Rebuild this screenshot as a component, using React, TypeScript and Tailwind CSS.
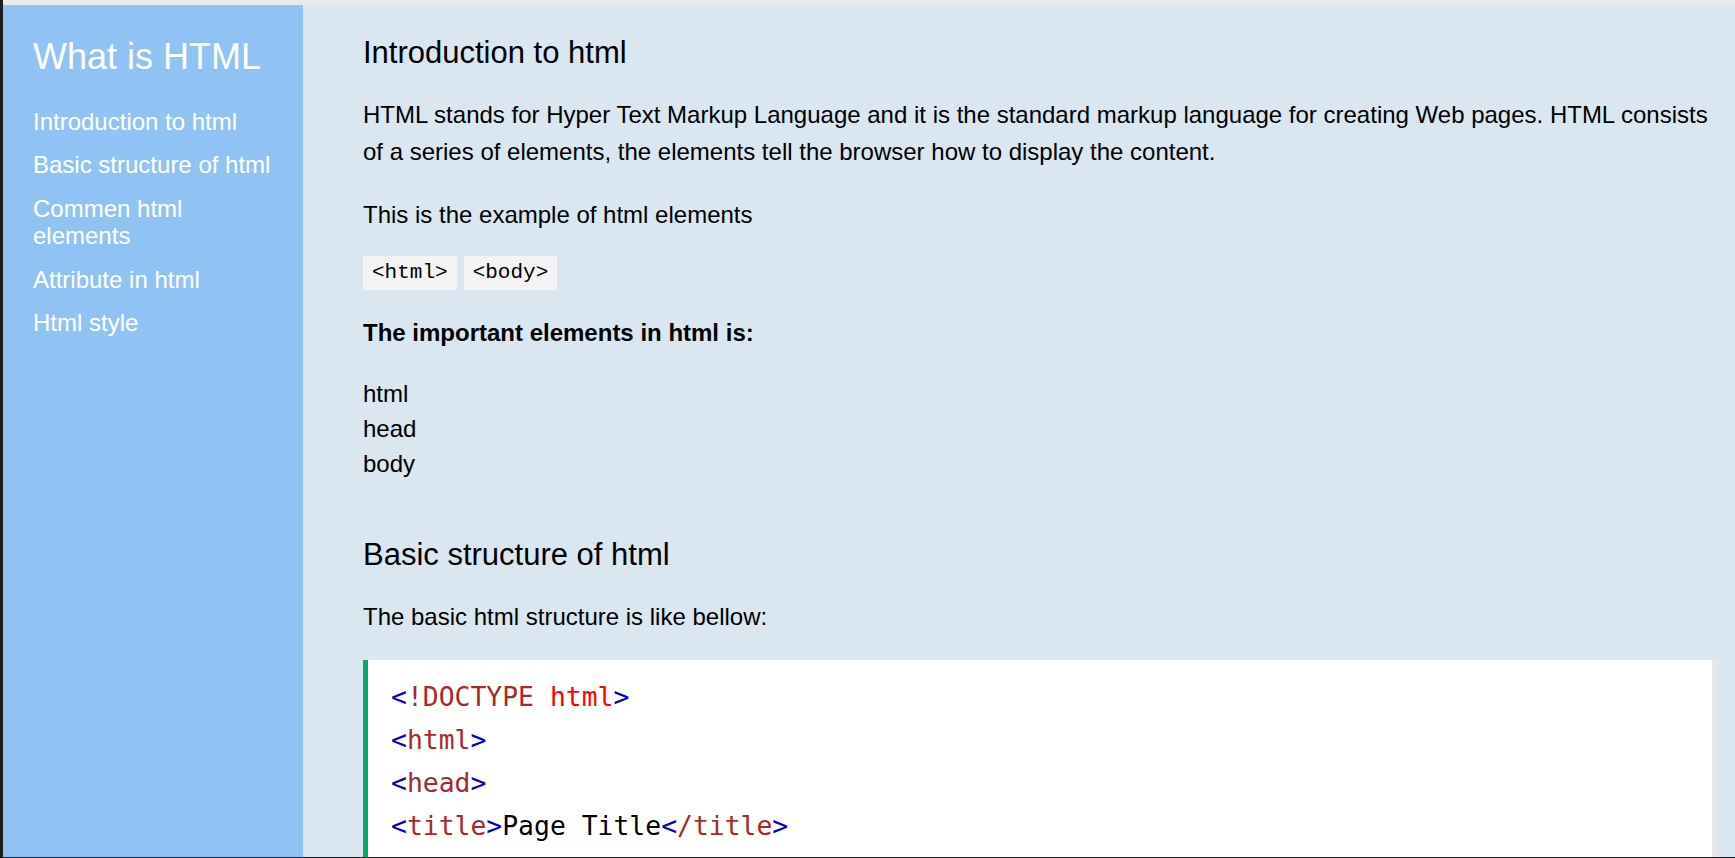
const navItems = [
  "Introduction to html",
  "Basic structure of html",
  "Commen html elements",
  "Attribute in html",
  "Html style",
];

const Lt = () => <span className="text-[#0000cd]">&lt;</span>;
const Gt = () => <span className="text-[#0000cd]">&gt;</span>;

const Tag = ({ name, close }: { name: string; close?: boolean }) => (
  <>
    <Lt />
    <span className="text-[#a52a2a]">{close ? "/" : ""}{name}</span>
    <Gt />
  </>
);

const Sidebar = () => (
  <aside className="w-[300px] shrink-0 bg-[#91c2f4] px-[30px] pt-[31px] text-white">
    <h1 className="text-[36px] leading-[41px] font-normal">What is HTML</h1>
    <nav className="mt-[31px] flex flex-col gap-4">
      {navItems.map((item) => (
        <a key={item} href="#" className="text-[24px] leading-[27.4px]">
          {item}
        </a>
      ))}
    </nav>
  </aside>
);

const CodeBlock = () => (
  <pre className="mt-[25px] h-[300px] bg-white border-l-[5px] border-l-[#04aa6d] border-r-[5px] border-r-[#e8e8e8] pl-[23px] pt-[15px] font-['DejaVu_Sans_Mono',monospace] text-[26.4px] leading-[43px] text-black">
    <div>
      <Lt />
      <span className="text-[#a52a2a]">!DOCTYPE</span>{" "}
      <span className="text-[#ff0000]">html</span>
      <Gt />
    </div>
    <div>
      <Tag name="html" />
    </div>
    <div>
      <Tag name="head" />
    </div>
    <div>
      <Tag name="title" />
      Page Title
      <Tag name="title" close />
    </div>
  </pre>
);

export default function App() {
  return (
    <div className="flex h-screen w-full flex-col overflow-hidden bg-[#1e1e1e] pl-[3px] pb-[1px] font-['Liberation_Sans',Arial,sans-serif]">
      <div className="h-[5px] shrink-0 bg-[#e9e9e9]" />
      <div className="flex min-h-0 flex-1">
        <Sidebar />
        <main className="min-w-0 flex-1 overflow-hidden bg-[#dae6f0] pl-[60px] pr-[18px] pt-[30px] text-black">
          <h2 className="text-[31px] leading-[36px]">Introduction to html</h2>
          <p className="mt-[25px] text-[24px] leading-[37.4px]">
            HTML stands for Hyper Text Markup Language and it is the standard markup language for creating Web pages.
            HTML consists of a series of elements, the elements tell the browser how to display the content.
          </p>
          <p className="mt-[25px] text-[24px] leading-[37.4px]">This is the example of html elements</p>
          <div className="mt-[23px] flex gap-[7px] font-['DejaVu_Sans_Mono',monospace] text-[21px]">
            <code className="bg-[#f3f3f3] px-[9px] py-[5px] leading-[24px]">&lt;html&gt;</code>
            <code className="bg-[#f3f3f3] px-[9px] py-[5px] leading-[24px]">&lt;body&gt;</code>
          </div>
          <p className="mt-[24px] text-[24px] leading-[37.4px] font-bold">The important elements in html is:</p>
          <ul className="mt-[24px] text-[24px] leading-[35px]">
            <li>html</li>
            <li>head</li>
            <li>body</li>
          </ul>

          <h2 className="mt-[56px] text-[31px] leading-[36px]">Basic structure of html</h2>
          <p className="mt-[25px] text-[24px] leading-[37.4px]">The basic html structure is like bellow:</p>
          <CodeBlock />
        </main>
      </div>
    </div>
  );
}
